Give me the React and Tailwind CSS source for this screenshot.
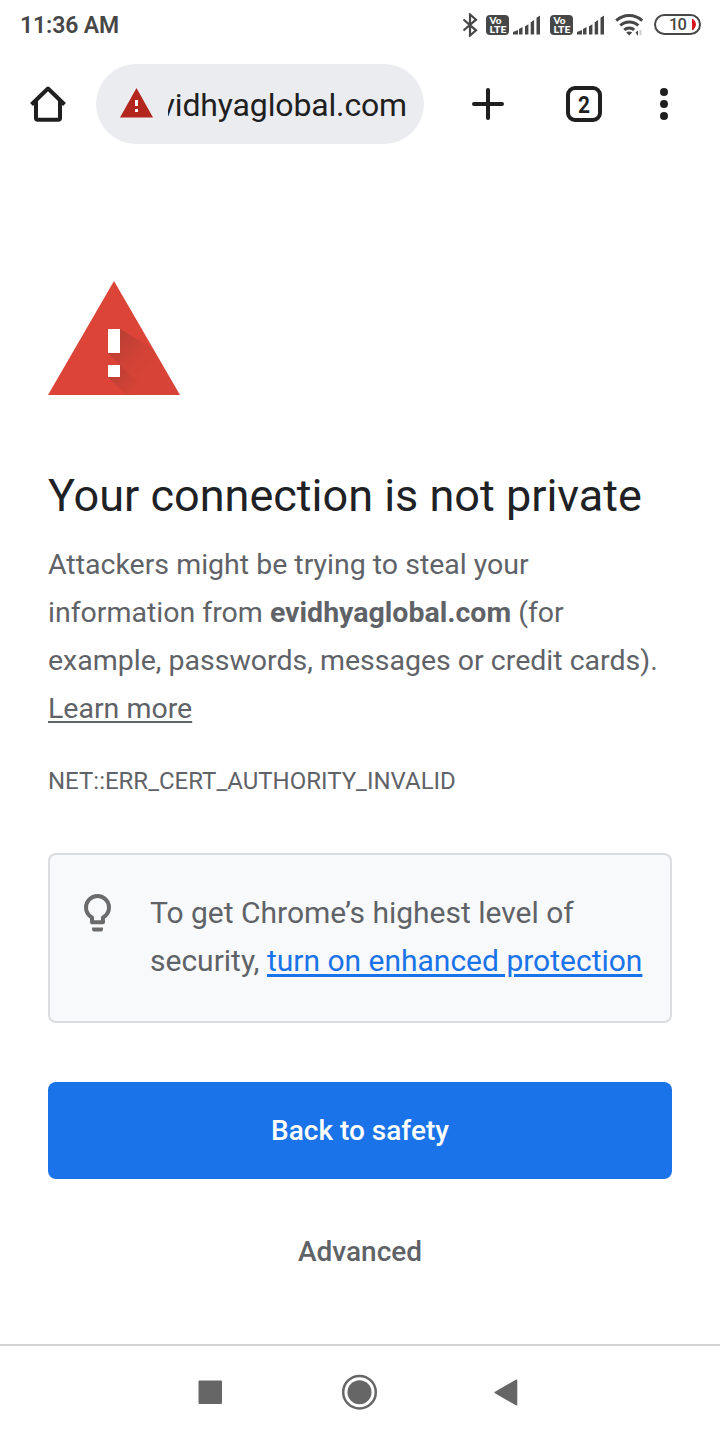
import React from 'react';

function Signal() {
  return (
    <svg className="h-[20px] w-[28px]" viewBox="0 0 28 20" fill="#474747">
      <path d="M0 19.500V17l5-2v4.500zM6 14l3.500-2v7.500H6zM12 11.200l3.400-2v10.300H12zM17.700 7.300l3.400-2.300v14.500h-3.400zM23.500 2.800L27 .5v19h-3.500z" />
    </svg>
  );
}

function VoLte() {
  return (
    <svg className="h-[20px] w-[23px]" viewBox="0 0 23 20">
      <rect width="23" height="20" rx="4" fill="#474747" />
      <g fill="#fff" fontFamily="Lato, sans-serif" fontSize="9.500" fontWeight="900">
        <text x="3.500" y="9" textLength="12" lengthAdjust="spacingAndGlyphs">Vo</text>
        <text x="3.500" y="17.800" textLength="17" lengthAdjust="spacingAndGlyphs">LTE</text>
      </g>
    </svg>
  );
}

function StatusBar() {
  return (
    <header className="flex h-16 items-start justify-between pl-5">
      <span className="mt-[9px] text-[23px] leading-[34px] font-semibold tracking-[-0.120px] text-[#474747]">11:36 AM</span>
      <div className="mt-[14px] mr-[19px] flex h-[21px] items-center">
        <svg className="mr-[8px] h-[24px] w-[16px]" viewBox="0 0 16 24" fill="none" stroke="#474747" strokeWidth="2.200">
          <path d="M1.500 6.500L14 17.300 8 22.500V1.500l6 5.200L1.500 17.500" />
        </svg>
        <VoLte />
        <div className="ml-[4px] h-[20px]"><Signal /></div>
        <div className="ml-[9px]"><VoLte /></div>
        <div className="ml-[4px] h-[20px]"><Signal /></div>
        <svg className="ml-[10px] h-[22px] w-[29px]" viewBox="0 0 29 22" fill="none" stroke="#474747" strokeWidth="3">
          <path d="M1.200 6.700a19 19 0 0 1 26 0M5.300 11.500a13 13 0 0 1 18 0M9.200 15.800a7.500 7.500 0 0 1 10 0" />
          <path d="M11.200 18.600q3-2 6 0l-3 3z" fill="#474747" stroke="none" />
          <path d="M20.500 18.500l2.500-2V22z" fill="#474747" stroke="none" />
          <path d="M25.500 16v5" stroke="#cccccc" strokeWidth="2" />
        </svg>
        <div className="relative mt-[-1px] ml-[10px] flex h-[21px] w-[47px] items-center overflow-hidden rounded-full border-2 border-[#474747] pl-[13px] text-[16.500px] leading-[17px] font-medium tracking-[-0.800px] text-[#474747]">
          10
          <svg className="absolute top-[3px] right-[3px] h-[11px] w-[4px]" viewBox="0 0 5 12" preserveAspectRatio="none"><path d="M0 0h1.500Q5 3 5 6t-3.500 6H0z" fill="#d8141c" /></svg>
        </div>
      </div>
    </header>
  );
}

function Toolbar() {
  return (
    <div className="flex h-20 items-center">
      <svg className="ml-[28px] h-[40px] w-[40px]" viewBox="0 0 40 40" fill="none" stroke="#1f1f1f" strokeWidth="4" strokeLinejoin="round">
        <path d="M3.500 20.500L20 4.500l16.500 16M8 17V34q0 1.800 1.800 1.800h20.400q1.800 0 1.800-1.800V17" />
      </svg>
      <div className="ml-[28px] flex h-20 w-[328px] items-center rounded-full bg-[#ebecf0] pl-6">
        <svg className="-mt-[2px] h-[30px] w-[33px] shrink-0" viewBox="0 0 33 30">
          <path d="M16.500 0L33 29.500H0z" fill="#b3261e" />
          <path d="M15 12h3v6h-3zM15 21h3v3h-3z" fill="#fff" />
        </svg>
        <div className="mt-[2px] ml-[15px] flex w-[240px] justify-end overflow-hidden text-[32px] leading-[44px] tracking-[-0.150px] text-[#1f1f1f]">
          <span className="mr-[1px] whitespace-nowrap">evidhyaglobal.com</span>
        </div>
      </div>
      <svg className="ml-[46px] h-[36px] w-[36px]" viewBox="0 0 36 36" stroke="#1f1f1f" strokeWidth="4" strokeLinecap="round">
        <path d="M18 4v28M4 18h28" />
      </svg>
      <div className="ml-[60px] flex h-[36px] w-[36px] items-center justify-center rounded-[9px] border-4 border-[#1f1f1f]">
        <svg className="h-[28px] w-[28px]" viewBox="0 0 28 28">
          <text x="14" y="22.500" textAnchor="middle" fontFamily="Roboto, sans-serif" fontSize="24" fontWeight="700" fill="#1f1f1f" textLength="12" lengthAdjust="spacingAndGlyphs">2</text>
        </svg>
      </div>
      <div className="ml-[58px] flex flex-col gap-[4px]">
        <i className="h-2 w-2 rounded-full bg-[#1f1f1f]" />
        <i className="h-2 w-2 rounded-full bg-[#1f1f1f]" />
        <i className="h-2 w-2 rounded-full bg-[#1f1f1f]" />
      </div>
    </div>
  );
}

function WarningIcon() {
  return (
    <svg className="h-[114px] w-[132px]" viewBox="0 0 132 114">
      <defs>
        <linearGradient id="shade" gradientUnits="userSpaceOnUse" x1="62" y1="56" x2="98" y2="92">
          <stop offset="0" stopColor="#262626" stopOpacity=".2" />
          <stop offset=".6" stopColor="#262626" stopOpacity=".06" />
          <stop offset="1" stopColor="#262626" stopOpacity=".02" />
        </linearGradient>
        <linearGradient id="shadeDot" gradientUnits="userSpaceOnUse" x1="64" y1="88" x2="86" y2="110">
          <stop offset="0" stopColor="#262626" stopOpacity=".18" />
          <stop offset="1" stopColor="#262626" stopOpacity=".02" />
        </linearGradient>
      </defs>
      <path d="M66 0l66 114H0z" fill="#db4437" />
      <path d="M72 48l32.600 19L132 114h-30L60 72h12z" fill="url(#shade)" />
      <path d="M72 84l30 30H78L60 96h12z" fill="url(#shadeDot)" />
      <path d="M60 48h12v24H60zM60 84h12v12H60z" fill="#fff" />
    </svg>
  );
}

export default function App() {
  return (
    <div className="flex h-[1440px] w-[720px] flex-col overflow-hidden bg-white font-['Roboto',sans-serif]">
      <StatusBar />
      <Toolbar />
      <main className="flex h-[1200px] flex-col px-12 pt-[137px] text-[#5f6368]">
        <WarningIcon />
        <h1 className="mt-[74px] text-[45px] leading-[54px] whitespace-nowrap text-[#202124]">Your connection is not private</h1>
        <p className="mt-[18px] text-[28.500px] leading-[48px] whitespace-nowrap">
          Attackers might be trying to steal your<br />
          information from <strong className="font-bold">evidhyaglobal.com</strong> (for<br />
          example, passwords, messages or credit cards).<br />
          <a className="underline decoration-2 underline-offset-[3px]">Learn more</a>
        </p>
        <div className="mt-[28px] text-[24px] leading-[40px]">NET::ERR_CERT_AUTHORITY_INVALID</div>
        <section className="mt-[52px] flex h-[170px] items-start rounded-lg border-2 border-[#dadce0] bg-[#f8f9fa] pt-[34px] pl-[34px]">
          <svg className="mt-[5px] h-[38px] w-[27px] shrink-0" viewBox="0 0 27 38" fill="none" stroke="#6b6b6b" strokeWidth="4">
            <path d="M8 28.200V23.500Q2 20 2 13.500a11.500 11.500 0 0 1 23 0Q25 20 19 23.500v4.700z" strokeLinejoin="round" />
            <path d="M8 33.500h11v1.500q0 2.500-2 2.500h-7q-2 0-2-2.500z" fill="#6b6b6b" stroke="none" />
          </svg>
          <p className="ml-[39px] text-[30px] leading-[48px] whitespace-nowrap">
            To get Chrome’s highest level of<br />
            security, <a className="text-[#1a73e8] underline decoration-[3px] underline-offset-[3px]">turn on enhanced protection</a>
          </p>
        </section>
        <button className="mt-[59px] h-[97px] shrink-0 rounded-lg bg-[#1a73e8] text-[28px] font-medium text-white">Back to safety</button>
        <button className="mt-[48px] h-[49px] shrink-0 text-[28px] font-medium">Advanced</button>
      </main>
      <nav className="flex h-24 items-center border-t-2 border-[#d2d2d2] pb-[2px]">
        <svg className="ml-[198px] h-[24px] w-[24px]" viewBox="0 0 24 24"><rect x=".5" y=".5" width="23.500" height="23.500" rx="1" fill="#666" /></svg>
        <svg className="ml-[120px] h-[36px] w-[36px]" viewBox="0 0 36 36"><circle cx="17.500" cy="18.200" r="16.300" fill="none" stroke="#666" strokeWidth="2.500" /><circle cx="17.500" cy="18.200" r="12" fill="#666" /></svg>
        <svg className="ml-[116px] h-[28px] w-[24px]" viewBox="0 0 24 28"><path d="M1.500 14.500L22.300 2.500v24z" fill="#666" stroke="#666" strokeWidth="2" strokeLinejoin="round" /></svg>
      </nav>
    </div>
  );
}
